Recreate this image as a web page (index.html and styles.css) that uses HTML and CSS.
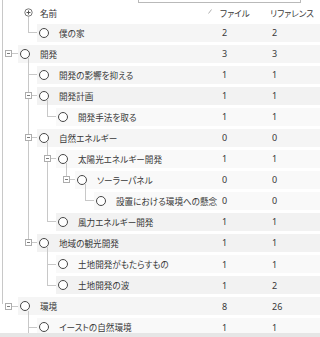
FILE: index.html
```html
<!DOCTYPE html>
<html lang="ja">
<head>
<meta charset="utf-8">
<link rel="stylesheet" href="styles.css">
</head>
<body>
<div class="top"><div class="topbox"></div></div>
<div class="row head">
  <div class="g g0 rpass"></div>
  <div class="g hdown"><svg class="plus" width="9" height="9" viewBox="0 0 9 9"><circle cx="4.5" cy="4.5" r="3.7" fill="#fff" stroke="#777" stroke-width="1"/><path d="M2.5 4.5h4M4.5 2.5v4" stroke="#555" stroke-width="1"/></svg></div>
  <div class="cell headcell">
    <span class="hname"><span>名前</span><svg class="sort" width="4" height="5" viewBox="0 0 4 5"><path d="M0.5 4.5L3.5 0.5" stroke="#b0b0b0" stroke-width="1"/></svg></span>
    <span class="hcol">ファイル</span><span class="hcol hcol2">リファレンス</span>
  </div>
</div>
<div class="rows">
  <div class="row">
    <div class="g g0 rpass"></div><div class="g end"></div>
    <div class="cell md"><span class="node"></span><span class="name">僕の家</span><span class="num">2</span><span class="num num2">2</span></div>
  </div>
  <div class="row">
    <div class="g g0 rtee"><span class="box"></span></div>
    <div class="cell md"><span class="node open"></span><span class="name">開発</span><span class="num">3</span><span class="num num2">3</span></div>
  </div>
  <div class="row">
    <div class="g g0 rpass"></div><div class="g tee"></div>
    <div class="cell md"><span class="node"></span><span class="name">開発の影響を抑える</span><span class="num">1</span><span class="num num2">1</span></div>
  </div>
  <div class="row">
    <div class="g g0 rpass"></div><div class="g tee"><span class="box"></span></div>
    <div class="cell dk"><span class="node open"></span><span class="name">開発計画</span><span class="num">1</span><span class="num num2">1</span></div>
  </div>
  <div class="row">
    <div class="g g0 rpass"></div><div class="g v"></div><div class="g end"></div>
    <div class="cell lt"><span class="node"></span><span class="name">開発手法を取る</span><span class="num">1</span><span class="num num2">1</span></div>
  </div>
  <div class="row">
    <div class="g g0 rpass"></div><div class="g tee"><span class="box"></span></div>
    <div class="cell md"><span class="node open"></span><span class="name">自然エネルギー</span><span class="num">0</span><span class="num num2">0</span></div>
  </div>
  <div class="row">
    <div class="g g0 rpass"></div><div class="g v"></div><div class="g tee"><span class="box"></span></div>
    <div class="cell lt"><span class="node open"></span><span class="name">太陽光エネルギー開発</span><span class="num">1</span><span class="num num2">1</span></div>
  </div>
  <div class="row">
    <div class="g g0 rpass"></div><div class="g v"></div><div class="g v"></div><div class="g end"><span class="box"></span></div>
    <div class="cell lt"><span class="node open"></span><span class="name">ソーラーパネル</span><span class="num">0</span><span class="num num2">0</span></div>
  </div>
  <div class="row">
    <div class="g g0 rpass"></div><div class="g v"></div><div class="g v"></div><div class="g"></div><div class="g end"></div>
    <div class="cell lt"><span class="node"></span><span class="name">設置における環境への懸念</span><span class="num">0</span><span class="num num2">0</span></div>
  </div>
  <div class="row">
    <div class="g g0 rpass"></div><div class="g v"></div><div class="g end"></div>
    <div class="cell dk"><span class="node"></span><span class="name">風力エネルギー開発</span><span class="num">1</span><span class="num num2">1</span></div>
  </div>
  <div class="row">
    <div class="g g0 rpass"></div><div class="g end"><span class="box"></span></div>
    <div class="cell dk"><span class="node open"></span><span class="name">地域の観光開発</span><span class="num">1</span><span class="num num2">1</span></div>
  </div>
  <div class="row">
    <div class="g g0 rpass"></div><div class="g"></div><div class="g tee"></div>
    <div class="cell lt"><span class="node"></span><span class="name">土地開発がもたらすもの</span><span class="num">1</span><span class="num num2">1</span></div>
  </div>
  <div class="row">
    <div class="g g0 rpass"></div><div class="g"></div><div class="g end"></div>
    <div class="cell dk"><span class="node"></span><span class="name">土地開発の波</span><span class="num">1</span><span class="num num2">2</span></div>
  </div>
  <div class="row">
    <div class="g g0 rend"><span class="box"></span></div>
    <div class="cell md"><span class="node open"></span><span class="name">環境</span><span class="num">8</span><span class="num num2">26</span></div>
  </div>
  <div class="row">
    <div class="g g0"></div><div class="g tee"></div>
    <div class="cell lt"><span class="node"></span><span class="name">イーストの自然環境</span><span class="num">1</span><span class="num num2">1</span></div>
  </div>
</div>
<div class="hscroll"></div>
</body>
</html>
```
FILE: styles.css
```css
:root {
  --ln: #c8c8c8;
}
html, body {
  margin: 0;
  padding: 0;
}
body {
  width: 320px;
  height: 337px;
  overflow: hidden;
  background: #fff;
  font-family: "Noto Sans CJK JP", "Noto Sans", sans-serif;
  font-size: 8.6px;
  color: #383838;
  display: flex;
  flex-direction: column;
  font-feature-settings: "palt";
}
.top {
  height: 3px;
  flex: none;
  background: linear-gradient(var(--ln), var(--ln)) no-repeat 2px 0 / 1px 100%;
}
.topbox {
  margin-left: 138px;
  width: 163px;
  height: 3px;
  box-sizing: border-box;
  border: 1px solid #b9b9b9;
  border-top: 0;
}
.row {
  display: flex;
  height: 21.05px;
  flex: none;
}
.row.head {
  height: 19px;
}
.rows {
  flex: 1;
  overflow: hidden;
  display: flex;
  flex-direction: column;
}
.g {
  width: 19px;
  flex: none;
  display: flex;
  align-items: center;
  background-repeat: no-repeat;
}
.g.g0 {
  width: 20px;
}
.rpass {
  background-image: linear-gradient(var(--ln), var(--ln));
  background-size: 1px 100%;
  background-position: 2px 0;
}
.rtee {
  background-image: linear-gradient(var(--ln), var(--ln)), linear-gradient(var(--ln), var(--ln));
  background-size: 1px 100%, 8px 1px;
  background-position: 2px 0, 12px 50%;
}
.rend {
  background-image: linear-gradient(var(--ln), var(--ln)), linear-gradient(var(--ln), var(--ln));
  background-size: 1px 40%, 8px 1px;
  background-position: 2px 0, 12px 50%;
}
.v {
  background-image: linear-gradient(var(--ln), var(--ln));
  background-size: 1px 100%;
  background-position: 8px 0;
}
.tee {
  background-image: linear-gradient(var(--ln), var(--ln)), linear-gradient(var(--ln), var(--ln));
  background-size: 1px 100%, 11px 1px;
  background-position: 8px 0, 8px 50%;
}
.end {
  background-image: linear-gradient(var(--ln), var(--ln)), linear-gradient(var(--ln), var(--ln));
  background-size: 1px 50%, 11px 1px;
  background-position: 8px 0, 8px 50%;
}
.hdown {
  background-image: linear-gradient(var(--ln), var(--ln));
  background-size: 1px 50%;
  background-position: 8px 100%;
}
.plus {
  display: block;
  margin-left: 4px;
  flex: none;
}
.box {
  width: 7px;
  height: 7px;
  margin-left: 5px;
  flex: none;
  box-sizing: border-box;
  border: 1px solid #adadad;
  background: linear-gradient(#7c7c7c, #7c7c7c) no-repeat center / 3px 1px, #fff;
}
.cell {
  flex: 1;
  min-width: 0;
  margin-left: -2px;
  padding-left: 2px;
  height: 18px;
  align-self: center;
  display: flex;
  align-items: center;
}
.cell.md { background: #f5f5f5; }
.cell.dk { background: #f2f2f2; }
.cell.lt { background: #f9f9f9; }
.headcell {
  height: 19px;
}
.hname {
  flex: 1;
  min-width: 0;
  padding-left: 1px;
  display: flex;
  align-items: center;
  justify-content: space-between;
  white-space: nowrap;
}
.sort {
  display: block;
  margin-right: 6px;
  margin-top: -2px;
}
.hcol {
  width: 50px;
  flex: none;
  box-sizing: border-box;
  padding-left: 2px;
  white-space: nowrap;
}
.hcol2 {
  width: 52px;
}
.node {
  position: relative;
  width: 10px;
  height: 10px;
  flex: none;
  box-sizing: border-box;
  border: 1.5px solid #474747;
  border-radius: 50%;
  background: #fff;
}
.node.open::after {
  content: "";
  position: absolute;
  left: 6.5px;
  top: 8.5px;
  width: 1px;
  height: 7px;
  background: var(--ln);
}
.name {
  flex: 1;
  min-width: 0;
  margin-left: 10px;
  white-space: nowrap;
  overflow: visible;
}
.num {
  width: 50px;
  flex: none;
  box-sizing: border-box;
  padding-left: 4px;
  font-family: "Noto Sans", sans-serif;
  font-size: 9px;
}
.num2 {
  width: 52px;
}
.hscroll {
  height: 4px;
  flex: none;
  background: #e6e6e6;
}
```
